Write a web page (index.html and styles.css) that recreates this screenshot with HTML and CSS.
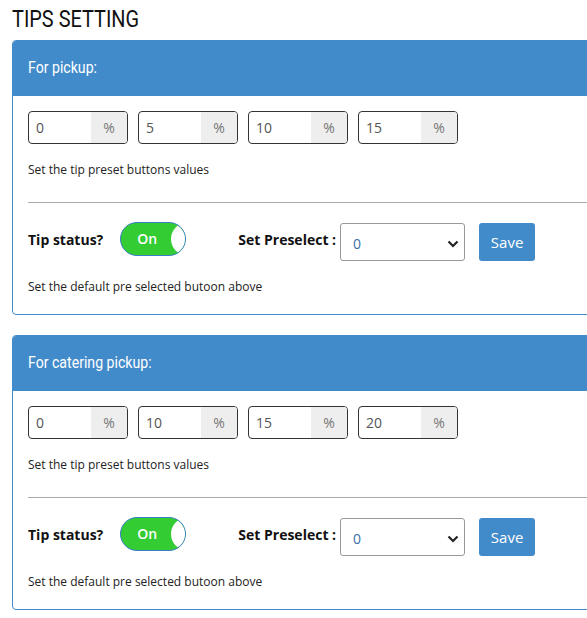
FILE: index.html
```html
<!DOCTYPE html>
<html>
<head>
<meta charset="utf-8">
<link rel="stylesheet" href="styles.css">
</head>
<body>
<h1 class="title"><span class="title-txt">TIPS SETTING</span></h1>

<section class="card">
  <div class="card-head"><span class="head-txt">For pickup:</span></div>
  <div class="card-body">
    <div class="presets">
      <div class="pct"><span class="val">0</span><span class="addon">%</span></div>
      <div class="pct"><span class="val">5</span><span class="addon">%</span></div>
      <div class="pct"><span class="val">10</span><span class="addon">%</span></div>
      <div class="pct"><span class="val">15</span><span class="addon">%</span></div>
    </div>
    <p class="hint hint-top">Set the tip preset buttons values</p>
    <hr class="sep">
    <div class="status-row">
      <span class="lbl">Tip status?</span>
      <div class="toggle"><span class="toggle-txt">On</span><span class="knob"></span></div>
      <span class="lbl lbl-pre">Set Preselect :</span>
      <div class="select"><span>0</span>
        <svg width="12" height="8" viewBox="0 0 12 8"><path d="M1.5 1.5 L6 6 L10.5 1.5" fill="none" stroke="#222" stroke-width="2.2"/></svg>
      </div>
      <button class="save">Save</button>
    </div>
    <p class="hint hint-bot">Set the default pre selected butoon above</p>
  </div>
</section>

<section class="card">
  <div class="card-head"><span class="head-txt">For catering pickup:</span></div>
  <div class="card-body">
    <div class="presets">
      <div class="pct"><span class="val">0</span><span class="addon">%</span></div>
      <div class="pct"><span class="val">10</span><span class="addon">%</span></div>
      <div class="pct"><span class="val">15</span><span class="addon">%</span></div>
      <div class="pct"><span class="val">20</span><span class="addon">%</span></div>
    </div>
    <p class="hint hint-top">Set the tip preset buttons values</p>
    <hr class="sep">
    <div class="status-row">
      <span class="lbl">Tip status?</span>
      <div class="toggle"><span class="toggle-txt">On</span><span class="knob"></span></div>
      <span class="lbl lbl-pre">Set Preselect :</span>
      <div class="select"><span>0</span>
        <svg width="12" height="8" viewBox="0 0 12 8"><path d="M1.5 1.5 L6 6 L10.5 1.5" fill="none" stroke="#222" stroke-width="2.2"/></svg>
      </div>
      <button class="save">Save</button>
    </div>
    <p class="hint hint-bot">Set the default pre selected butoon above</p>
  </div>
</section>
</body>
</html>
```

FILE: styles.css
```css
html, body {
  margin: 0;
  padding: 0;
  background: #fff;
  overflow: hidden;
}
body {
  padding: 0 0 0 12px;
  font-family: "Open Sans", "Liberation Sans", sans-serif;
  color: #222;
}
.title {
  margin: 0;
  height: 40px;
  line-height: 38px;
  font-family: Roboto, "Liberation Sans", sans-serif;
  font-weight: 400;
  font-size: 24px;
  color: #111;
}
.title-txt {
  display: inline-block;
  transform: scaleX(0.83);
  transform-origin: left center;
}
.card {
  width: 640px;
  border: 1px solid #428bca;
  border-radius: 4px;
  margin-bottom: 20px;
  overflow: hidden;
}
.card-head {
  background: #428bca;
  color: #fff;
  height: 55px;
  line-height: 53px;
  padding-left: 15px;
  font-family: Roboto, "Liberation Sans", sans-serif;
  font-size: 17px;
}
.head-txt {
  display: inline-block;
  transform: scaleX(0.83);
  transform-origin: left center;
}
.card-body {
  padding: 15px 15px 0 15px;
}
.presets {
  display: flex;
  gap: 10px;
}
.pct {
  display: flex;
  width: 98px;
  height: 31px;
  border: 1px solid #333;
  border-radius: 4px;
  overflow: hidden;
  font-size: 14px;
}
.val {
  flex: 1;
  padding-left: 7px;
  line-height: 31px;
  color: #555;
}
.addon {
  width: 36px;
  background: #eee;
  color: #777;
  text-align: center;
  line-height: 31px;
}
.hint {
  margin: 0;
  font-size: 12px;
  color: #222;
}
.hint-top {
  margin-top: 17px;
  line-height: 18px;
}
.sep {
  border: 0;
  border-top: 1px solid #aaa;
  margin: 23px 0 0 0;
}
.status-row {
  display: flex;
  align-items: flex-start;
  margin-top: 19px;
  height: 38px;
}
.lbl {
  font-weight: 700;
  font-size: 14px;
  line-height: 36px;
  color: #111;
}
.toggle {
  position: relative;
  margin-left: 17px;
  width: 64px;
  height: 32px;
  border: 1px solid #3a7fc4;
  border-radius: 17px;
  background: #33cc33;
  overflow: hidden;
}
.toggle-txt {
  display: block;
  width: 52px;
  text-align: center;
  line-height: 31px;
  color: #fff;
  font-size: 14px;
  font-weight: 600;
}
.knob {
  position: absolute;
  top: 0;
  right: -16px;
  width: 30px;
  height: 32px;
  border-radius: 50%;
  background: #fff;
}
.lbl-pre {
  margin-left: 52px;
  margin-right: 4px;
}
.select {
  display: flex;
  align-items: center;
  justify-content: space-between;
  box-sizing: border-box;
  width: 125px;
  height: 38px;
  margin-top: 1px;
  border: 1px solid #999;
  border-radius: 3px;
  padding: 3px 5px 0 12px;
  font-size: 14px;
  color: #3a6fa8;
}
.save {
  margin-left: 14px;
  margin-top: 1px;
  width: 56px;
  height: 38px;
  border: 0;
  border-radius: 3px;
  background: #428bca;
  color: #fff;
  font-family: "Open Sans", "Liberation Sans", sans-serif;
  font-size: 15px;
}
.hint-bot {
  margin-top: 18px;
  line-height: 18px;
  padding-bottom: 18px;
}
```
